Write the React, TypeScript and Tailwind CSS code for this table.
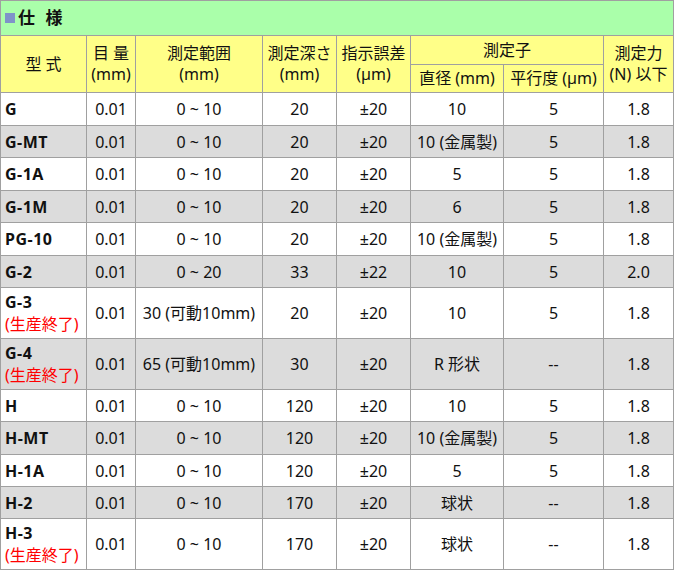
const FONT = "font-['Noto_Sans','Noto_Sans_CJK_JP',sans-serif]"

type Row = {
  model: string
  discontinued?: boolean
  scale: string
  range: string
  depth: string
  error: string
  dia: string
  par: string
  force: string
  h: string
  grey?: boolean
}

const ROWS: Row[] = [
  { model: 'G', scale: '0.01', range: '0 ~ 10', depth: '20', error: '±20', dia: '10', par: '5', force: '1.8', h: 'h-[33px]' },
  { model: 'G-MT', scale: '0.01', range: '0 ~ 10', depth: '20', error: '±20', dia: '10 (金属製)', par: '5', force: '1.8', h: 'h-[32px]', grey: true },
  { model: 'G-1A', scale: '0.01', range: '0 ~ 10', depth: '20', error: '±20', dia: '5', par: '5', force: '1.8', h: 'h-[33px]' },
  { model: 'G-1M', scale: '0.01', range: '0 ~ 10', depth: '20', error: '±20', dia: '6', par: '5', force: '1.8', h: 'h-[32px]', grey: true },
  { model: 'PG-10', scale: '0.01', range: '0 ~ 10', depth: '20', error: '±20', dia: '10 (金属製)', par: '5', force: '1.8', h: 'h-[33px]' },
  { model: 'G-2', scale: '0.01', range: '0 ~ 20', depth: '33', error: '±22', dia: '10', par: '5', force: '2.0', h: 'h-[32px]', grey: true },
  { model: 'G-3', discontinued: true, scale: '0.01', range: '30 (可動10mm)', depth: '20', error: '±20', dia: '10', par: '5', force: '1.8', h: 'h-[51px]' },
  { model: 'G-4', discontinued: true, scale: '0.01', range: '65 (可動10mm)', depth: '30', error: '±20', dia: 'R 形状', par: '--', force: '1.8', h: 'h-[51px]', grey: true },
  { model: 'H', scale: '0.01', range: '0 ~ 10', depth: '120', error: '±20', dia: '10', par: '5', force: '1.8', h: 'h-[32px]' },
  { model: 'H-MT', scale: '0.01', range: '0 ~ 10', depth: '120', error: '±20', dia: '10 (金属製)', par: '5', force: '1.8', h: 'h-[33px]', grey: true },
  { model: 'H-1A', scale: '0.01', range: '0 ~ 10', depth: '120', error: '±20', dia: '5', par: '5', force: '1.8', h: 'h-[32px]' },
  { model: 'H-2', scale: '0.01', range: '0 ~ 10', depth: '170', error: '±20', dia: '球状', par: '--', force: '1.8', h: 'h-[32px]', grey: true },
  { model: 'H-3', discontinued: true, scale: '0.01', range: '0 ~ 10', depth: '170', error: '±20', dia: '球状', par: '--', force: '1.8', h: 'h-[51px]' },
]

const cell = 'border border-[#a0a0a0] text-center align-middle p-0'
const head = 'border border-[#a0a0a0] bg-[#ffff88] text-center align-middle font-normal p-0 leading-[21px]'

export default function App() {
  return (
    <div className={`${FONT} bg-white w-[674px] h-[570px] text-[16px] text-[#111]`}>
      <table className="w-[673px] border-collapse table-fixed">
        <colgroup>
          <col className="w-[86px]" />
          <col className="w-[49px]" />
          <col className="w-[127px]" />
          <col className="w-[74px]" />
          <col className="w-[74px]" />
          <col className="w-[93px]" />
          <col className="w-[100px]" />
          <col className="w-[70px]" />
        </colgroup>
        <tbody>
          <tr className="h-[35px]">
            <td colSpan={8} className="border border-[#a0a0a0] bg-[#aaffaa] pl-[4px] align-middle">
              <div className="flex items-center gap-[3px]">
                <span className="w-[10px] h-[10px] bg-[#7f93c9]" />
                <span className="font-bold text-[17px] tracking-[3px]">仕 様</span>
              </div>
            </td>
          </tr>
          <tr className="h-[29px]">
            <th rowSpan={2} className={head}>型 式</th>
            <th rowSpan={2} className={head}>目 量<br />(mm)</th>
            <th rowSpan={2} className={head}>測定範囲<br />(mm)</th>
            <th rowSpan={2} className={head}>測定深さ<br />(mm)</th>
            <th rowSpan={2} className={head}>指示誤差<br />(µm)</th>
            <th colSpan={2} className={head}>測定子</th>
            <th rowSpan={2} className={head}>測定力<br />(N) 以下</th>
          </tr>
          <tr className="h-[28px]">
            <th className={head}>直径 (mm)</th>
            <th className={head}>平行度 (µm)</th>
          </tr>
          {ROWS.map((r) => (
            <tr key={r.model} className={`${r.h} ${r.grey ? 'bg-[#dcdcdc]' : 'bg-white'}`}>
              <td className="border border-[#a0a0a0] px-[4px] align-middle leading-[22px]">
                <div className="font-bold tracking-[0.5px]">{r.model}</div>
                {r.discontinued && <div className="text-[#ff0000]">(生産終了)</div>}
              </td>
              <td className={cell}>{r.scale}</td>
              <td className={cell}>{r.range}</td>
              <td className={cell}>{r.depth}</td>
              <td className={cell}>{r.error}</td>
              <td className={cell}>{r.dia}</td>
              <td className={cell}>{r.par}</td>
              <td className={cell}>{r.force}</td>
            </tr>
          ))}
        </tbody>
      </table>
    </div>
  )
}
